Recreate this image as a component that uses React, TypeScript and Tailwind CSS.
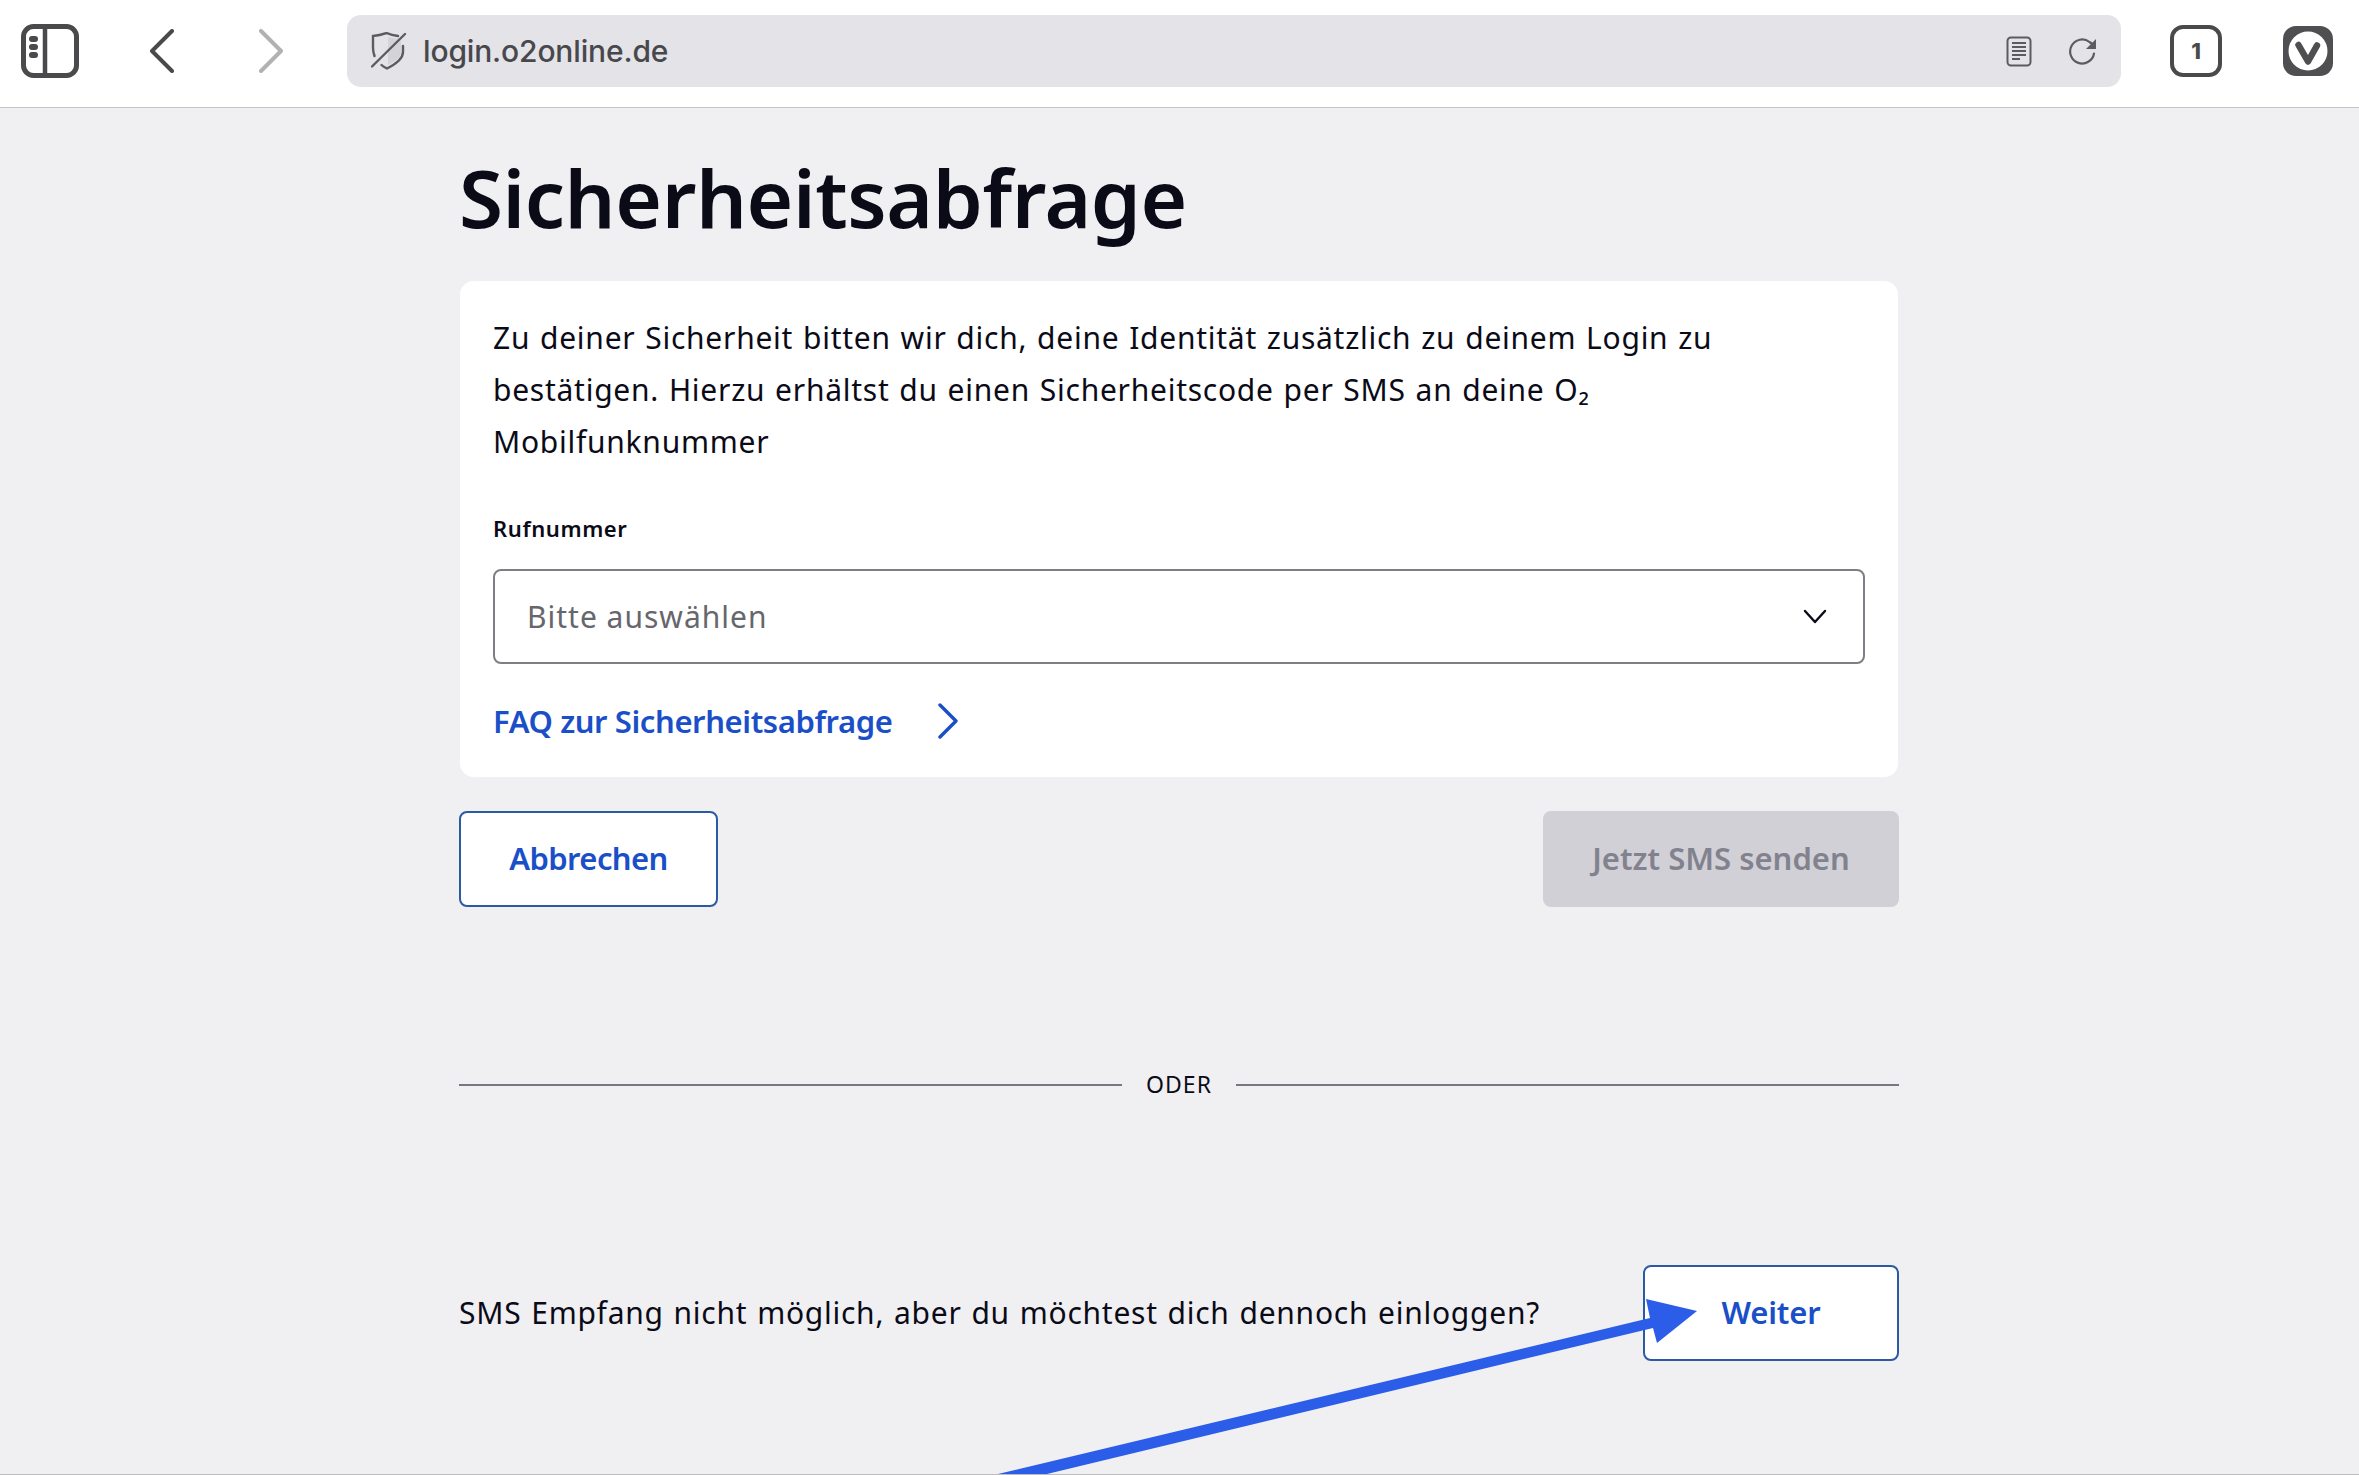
const bodyFont = "font-['Noto_Sans','Open_Sans',sans-serif]";

const Toolbar = () => {
  return (
    <div className="flex h-[108px] items-center border-b border-[#c4c4c6] bg-white pb-[5px]">
      {/* Sidebar toggle */}
      <svg className="ml-[21px] shrink-0" width="58" height="54" viewBox="0 0 58 54" fill="none">
        <rect x="2.5" y="2.5" width="53" height="49" rx="10" stroke="#4a4a4c" strokeWidth="5" />
        <path d="M24 3v48" stroke="#4a4a4c" strokeWidth="4.5" />
        <rect x="8" y="12" width="9" height="6" rx="3" fill="#4a4a4c" />
        <rect x="8" y="20" width="9" height="6" rx="3" fill="#4a4a4c" />
        <rect x="8" y="28" width="9" height="6" rx="3" fill="#4a4a4c" />
      </svg>

      {/* Back */}
      <svg className="ml-[71px] shrink-0" width="24" height="44" viewBox="0 0 24 44" fill="none">
        <path d="M22 2 2 22l20 20" stroke="#4a4a4c" strokeWidth="4" strokeLinecap="round" strokeLinejoin="round" />
      </svg>

      {/* Forward */}
      <svg className="ml-[85px] shrink-0" width="24" height="44" viewBox="0 0 24 44" fill="none">
        <path d="M2 2l20 20L2 42" stroke="#b2b2b2" strokeWidth="4" strokeLinecap="round" strokeLinejoin="round" />
      </svg>

      {/* Address bar */}
      <div className="ml-[64px] flex h-[72px] w-[1774px] shrink-0 items-center rounded-[14px] bg-[#e3e3e8]">
        <svg className="ml-[24px] shrink-0" width="36" height="38" viewBox="0 0 36 38" fill="none">
          <path d="M17 5C21 6 25 6.500 30 7V20C30 25 25 29 17 33z" fill="#d3d3d8" />
          <path d="M3.500 24C2.500 21 2 19 2 16V4C7 3.500 11 2.500 15.500 1C19 2.500 23 3.500 27 4" stroke="#5c5c60" strokeWidth="2.400" strokeLinecap="round" />
          <path d="M32 14V20C32 27 25 32 16 36.500C14 35.500 12 34.500 10.500 33" stroke="#5c5c60" strokeWidth="2.400" strokeLinecap="round" />
          <path d="M1 34.500 34 2" stroke="#5c5c60" strokeWidth="2.400" strokeLinecap="round" />
        </svg>
        <span className="ml-[16px] font-['Inter',sans-serif] text-[30px] font-medium tracking-[-0.15px] text-[#48484c]">
          login.o2online.de
        </span>
        <svg className="ml-auto shrink-0" width="26" height="31" viewBox="0 0 26 31" fill="none">
          <rect x="1.500" y="1.500" width="23" height="28" rx="3.500" stroke="#5c5c60" strokeWidth="2" />
          <path d="M6 7h14M6 11h14M6 15h14M6 19h14M6 23h8" stroke="#5c5c60" strokeWidth="2" />
        </svg>
        <svg className="ml-[36px] mr-[23px] shrink-0" width="30" height="28" viewBox="0 0 30 28" fill="none">
          <path d="M26 16.500A12 12 0 1 1 21.500 5L25 7.500" stroke="#5c5c60" strokeWidth="2.200" strokeLinecap="round" />
          <path d="M28 2v10H18z" fill="#5c5c60" />
        </svg>
      </div>

      {/* Tabs */}
      <div className="ml-[49px] flex h-[52px] w-[52px] shrink-0 items-center justify-center rounded-[13px] border-[4px] border-[#4a4a4c] font-['Inter',sans-serif] text-[22px] font-extrabold text-[#4a4a4c]">
        1
      </div>

      {/* Vivaldi logo */}
      <svg className="ml-[61px] shrink-0" width="50" height="50" viewBox="0 0 50 50" fill="none">
        <rect width="50" height="50" rx="13" fill="#4f4f51" />
        <circle cx="25" cy="25" r="19.500" fill="white" />
        <path d="M15.500 19 25 35.500 34 19.500" stroke="#4f4f51" strokeWidth="6.500" strokeLinecap="round" strokeLinejoin="round" />
      </svg>
    </div>
  );
};

const Arrow = () => {
  return (
    <svg className="pointer-events-none absolute inset-0" width="2359" height="1475" viewBox="0 0 2359 1475" fill="none">
      <polygon points="998,1474 1650,1318 1646,1299 1697,1311 1657,1343 1653,1328 1047,1474" fill="#2b5de8" />
    </svg>
  );
};

export default function App() {
  return (
    <div className={`relative box-border h-[1475px] w-[2359px] overflow-hidden border-b border-[#bdbdc0] bg-[#f0f0f3] ${bodyFont}`}>
      <Toolbar />

      <div className="ml-[459px] w-[1440px]">
        <h1 className="mt-[49px] mb-[44px] text-[80px] leading-[80px] font-semibold tracking-[-0.4px] text-[#0b0b18]">
          Sicherheitsabfrage
        </h1>

        {/* Card */}
        <div className="mx-px rounded-[14px] bg-white px-[33px] pt-[31px] pb-[36px]">
          <p className="text-[30px] leading-[52px] tracking-[0.74px] [word-spacing:1.3px] text-[#0b0b18]">
            Zu deiner Sicherheit bitten wir dich, deine Identität zusätzlich zu deinem Login zu
            <br />
            bestätigen. Hierzu erhältst du einen Sicherheitscode per SMS an deine O₂
            <br />
            Mobilfunknummer
          </p>

          <div className="mt-[45px] text-[22px] leading-[30px] font-semibold tracking-[0.6px] text-[#0b0b18]">Rufnummer</div>

          <div className="mt-[26px] flex h-[95px] items-center justify-between rounded-[8px] border-2 border-[#7e7e84] bg-white pr-[36px] pl-[32px]">
            <span className="text-[30px] tracking-[1px] text-[#66666c]">Bitte auswählen</span>
            <svg width="24" height="16" viewBox="0 0 24 16" fill="none">
              <path d="M2 2l10 11L22 2" stroke="#0b0b18" strokeWidth="2.400" strokeLinecap="round" strokeLinejoin="round" />
            </svg>
          </div>

          <div className="mt-[37px] flex h-[40px] items-center">
            <span className="text-[31px] leading-[40px] font-semibold tracking-[-0.4px] text-[#1a4fc8]">FAQ zur Sicherheitsabfrage</span>
            <svg className="ml-[45px]" width="22" height="36" viewBox="0 0 22 36" fill="none">
              <path d="M3 2l16 16L3 34" stroke="#1a4fc8" strokeWidth="3.400" strokeLinecap="round" strokeLinejoin="round" />
            </svg>
          </div>
        </div>

        {/* Actions */}
        <div className="mt-[34px] flex items-center justify-between">
          <button className="h-[96px] w-[259px] rounded-[8px] border-2 border-[#2a5aa4] bg-white pb-[2px] text-[31px] font-semibold tracking-[-0.6px] text-[#1a4fc8]">
            Abbrechen
          </button>
          <button className="h-[96px] w-[356px] rounded-[8px] bg-[#d0d0d6] pb-[2px] text-[31px] font-semibold text-[#82828f]">
            Jetzt SMS senden
          </button>
        </div>

        {/* Divider */}
        <div className="mt-[163px] flex h-[30px] items-center gap-[24px]">
          <div className="h-[2px] flex-1 bg-[#77777f]" />
          <span className="pb-[2px] text-[23px] tracking-[1.100px] text-[#0b0b18]">ODER</span>
          <div className="h-[2px] flex-1 bg-[#77777f]" />
        </div>

        {/* Fallback row */}
        <div className="mt-[165px] flex items-center justify-between">
          <span className="pb-[2px] text-[30px] tracking-[0.74px] [word-spacing:1.3px] text-[#0b0b18]">
            SMS Empfang nicht möglich, aber du möchtest dich dennoch einloggen?
          </span>
          <button className="h-[96px] w-[256px] rounded-[8px] border-2 border-[#2a5aa4] bg-white pb-[2px] text-[31px] font-semibold tracking-[-0.2px] text-[#1a4fc8]">
            Weiter
          </button>
        </div>
      </div>

      <Arrow />
    </div>
  );
}
